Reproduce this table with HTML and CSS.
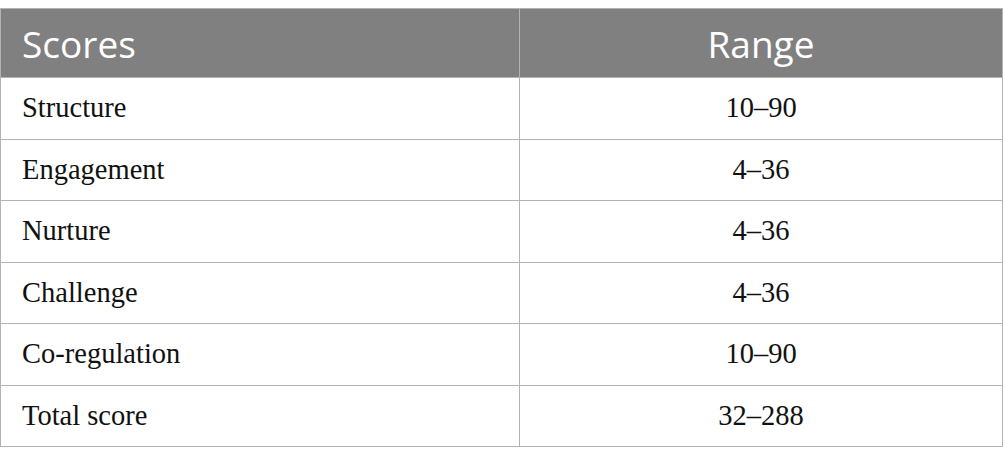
FILE: index.html
```html
<!DOCTYPE html>
<html>
<head>
<meta charset="utf-8">
<link rel="stylesheet" href="styles.css">
</head>
<body>
<table class="scores">
  <thead>
    <tr><th class="c1">Scores</th><th class="c2">Range</th></tr>
  </thead>
  <tbody>
    <tr><td class="c1">Structure</td><td class="c2">10–90</td></tr>
    <tr><td class="c1">Engagement</td><td class="c2">4–36</td></tr>
    <tr><td class="c1">Nurture</td><td class="c2">4–36</td></tr>
    <tr><td class="c1">Challenge</td><td class="c2">4–36</td></tr>
    <tr><td class="c1">Co-regulation</td><td class="c2">10–90</td></tr>
    <tr><td class="c1">Total score</td><td class="c2">32–288</td></tr>
  </tbody>
</table>
</body>
</html>
```
FILE: styles.css
```css
html, body {
  margin: 0;
  padding: 0;
  background: #ffffff;
}
body {
  padding-top: 8px;
}
.scores {
  border-collapse: collapse;
  width: 1003px;
  table-layout: fixed;
}
.scores th, .scores td {
  border: 1px solid #b3b3b3;
  padding: 0 0 0 21px;
  vertical-align: middle;
}
.scores th {
  background: #7f807f;
  color: #ffffff;
  font-family: "Open Sans", "Noto Sans", sans-serif;
  font-weight: 400;
  font-size: 37px;
  height: 68px;
  text-align: left;
}
.scores td {
  font-family: "Liberation Serif", "Times New Roman", serif;
  font-size: 28.5px;
  color: #111111;
  height: 60.5px;
}
.scores .c1 { width: 497px; }
.scores .c2 { text-align: center; padding-left: 0; }
.scores th.c2 { text-align: center; }
```
